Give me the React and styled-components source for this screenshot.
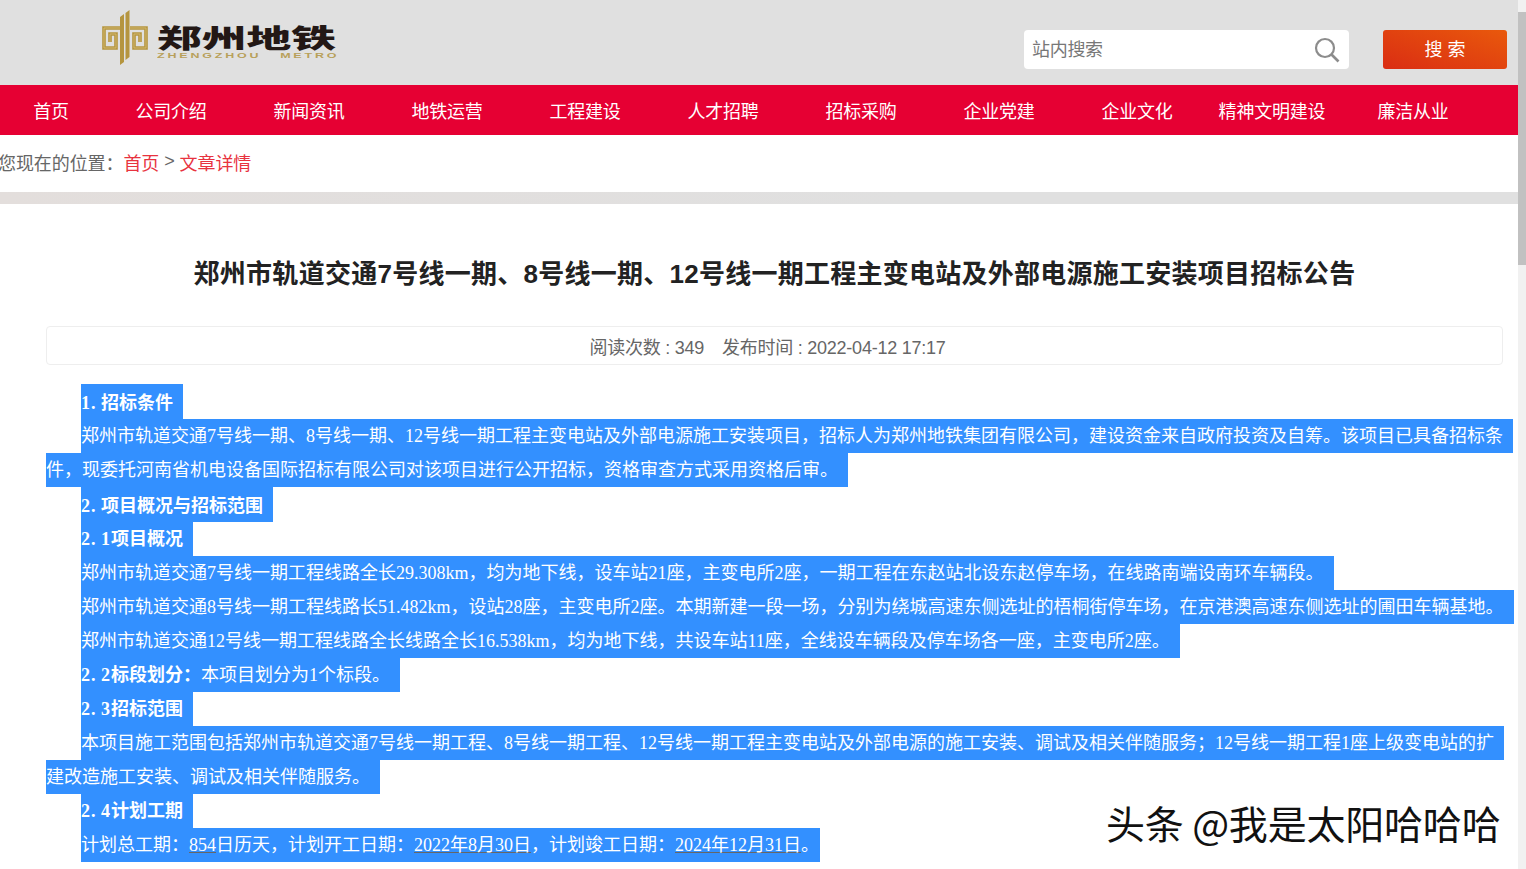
import React from "react";
import styled, { createGlobalStyle } from "styled-components";

const Under = styled.span`
  text-decoration: underline;
  text-decoration-color: #666;
`;

const NumText = styled.span`
  font-weight: 700;
  letter-spacing: 1px;
`;

const Dot = styled.span`
  letter-spacing: 5.5px;
`;

const Strong = styled.span`
  font-weight: 700;
`;

// bold heading numbers sit on an even 10px pitch, dot included
function Num({ major, minor }) {
  return (
    <NumText>
      {major}
      <Dot>.</Dot>
      {minor}
    </NumText>
  );
}

const NAV = [
  ["首页", 102],
  ["公司介绍", 138],
  ["新闻资讯", 138],
  ["地铁运营", 138],
  ["工程建设", 138],
  ["人才招聘", 138],
  ["招标采购", 138],
  ["企业党建", 138],
  ["企业文化", 138],
  ["精神文明建设", 132],
  ["廉洁从业", 150],
];

const LINES = [
  { indent: true, bold: true, tall: true, text: <><Num major="1" />招标条件</> },
  { indent: true, text: "郑州市轨道交通7号线一期、8号线一期、12号线一期工程主变电站及外部电源施工安装项目，招标人为郑州地铁集团有限公司，建设资金来自政府投资及自筹。该项目已具备招标条" },
  { text: "件，现委托河南省机电设备国际招标有限公司对该项目进行公开招标，资格审查方式采用资格后审。" },
  { indent: true, bold: true, tall: true, text: <><Num major="2" />项目概况与招标范围</> },
  { indent: true, bold: true, text: <><Num major="2" minor="1" />项目概况</> },
  { indent: true, text: "郑州市轨道交通7号线一期工程线路全长29.308km，均为地下线，设车站21座，主变电所2座，一期工程在东赵站北设东赵停车场，在线路南端设南环车辆段。" },
  { indent: true, text: "郑州市轨道交通8号线一期工程线路长51.482km，设站28座，主变电所2座。本期新建一段一场，分别为绕城高速东侧选址的梧桐街停车场，在京港澳高速东侧选址的圃田车辆基地。" },
  { indent: true, text: "郑州市轨道交通12号线一期工程线路全长线路全长16.538km，均为地下线，共设车站11座，全线设车辆段及停车场各一座，主变电所2座。" },
  { indent: true, text: <><Num major="2" minor="2" /><Strong>标段划分：</Strong>本项目划分为1个标段。</> },
  { indent: true, bold: true, text: <><Num major="2" minor="3" />招标范围</> },
  { indent: true, text: "本项目施工范围包括郑州市轨道交通7号线一期工程、8号线一期工程、12号线一期工程主变电站及外部电源的施工安装、调试及相关伴随服务；12号线一期工程1座上级变电站的扩" },
  { text: "建改造施工安装、调试及相关伴随服务。" },
  { indent: true, bold: true, text: <><Num major="2" minor="4" />计划工期</> },
  { indent: true, last: true, text: <>计划总工期：<Under>854</Under>日历天，计划开工日期：<Under>2022年8月30日</Under>，计划竣工日期：<Under>2024年12月31日</Under>。</> },
];

const GlobalStyle = createGlobalStyle`
  html, body {
    margin: 0;
    padding: 0;
    height: 100%;
    overflow: hidden;
    background: #fff;
  }
  body {
    font-family: "Liberation Sans", "Noto Sans CJK SC", sans-serif;
  }
`;

const Shell = styled.div`
  display: flex;
  width: 1526px;
  height: 869px;
  overflow: hidden;
  position: relative;
`;

const Page = styled.div`
  width: 1518px;
  flex: none;
`;

const ScrollTrack = styled.div`
  width: 8px;
  background: #f1f1f1;
  padding-top: 12px;
`;

const ScrollThumb = styled.div`
  height: 253px;
  background: #c1c1c1;
`;

const Header = styled.header`
  height: 85px;
  background: #e0e0e0;
  display: flex;
  align-items: flex-start;
`;

const Logo = styled.div`
  display: flex;
  margin: 10px 0 0 102px;
  gap: 9px;
`;

const LogoWords = styled.div`
  display: flex;
  flex-direction: column;
  padding-top: 13px;
  width: 181px;
`;

const LogoCn = styled.div`
  font-family: "Noto Sans CJK SC", sans-serif;
  font-weight: 900;
  font-size: 26px;
  line-height: 28px;
  color: #231815;
  white-space: nowrap;
  transform: scaleX(1.72);
  transform-origin: left center;
`;

const LogoEn = styled.div`
  font-family: "Liberation Sans", sans-serif;
  font-weight: 700;
  font-size: 8px;
  line-height: 8px;
  margin-top: 1px;
  letter-spacing: 1.8px;
  color: #b8a05a;
  white-space: pre;
  transform: scaleX(1.56);
  transform-origin: left center;
`;

const SearchArea = styled.div`
  margin: 30px 11px 0 auto;
  display: flex;
  gap: 34px;
`;

const SearchBox = styled.div`
  width: 325px;
  height: 39px;
  box-sizing: border-box;
  background: #fff;
  border-radius: 4px;
  padding: 0 9px 0 8px;
  display: flex;
  align-items: center;
  justify-content: space-between;
  font-size: 18px;
  letter-spacing: -0.3px;
  color: #777;
`;

const SearchHint = styled.span`
  margin-bottom: 4px;
`;

const SearchButton = styled.button`
  width: 124px;
  height: 39px;
  border: 0;
  padding: 0 0 4px 5px;
  border-radius: 3px;
  background: linear-gradient(20deg, #da2d13 0%, #e9590c 100%);
  color: #fff;
  font-family: "Noto Sans CJK SC", sans-serif;
  font-size: 18px;
  letter-spacing: 5px;
`;

const Nav = styled.nav`
  height: 50px;
  background: #e60033;
  display: flex;
  align-items: center;
`;

const NavItem = styled.a`
  flex: none;
  width: ${(p) => p.$w}px;
  text-align: center;
  color: #fff;
  font-size: 18px;
  letter-spacing: -0.2px;
`;

const Crumbs = styled.div`
  height: 57px;
  box-sizing: border-box;
  padding-bottom: 4px;
  display: flex;
  align-items: center;
  margin-left: -2px;
  font-size: 18px;
  letter-spacing: -0.08px;
  color: #666;
  white-space: pre;
`;

const CrumbLink = styled.a`
  color: #e8333f;
`;

const GreyBar = styled.div`
  height: 12px;
  background: linear-gradient(90deg, #e3dedc 0%, #e0e0e0 60%);
`;

const Article = styled.article`
  padding: 0 6px 0 46px;
`;

const Title = styled.h1`
  margin: 0;
  padding-top: 52px;
  height: 122px;
  box-sizing: border-box;
  line-height: 36px;
  text-align: center;
  font-size: 26px;
  font-weight: 700;
  letter-spacing: 0.26px;
  color: #222;
  width: 1457px;
`;

const Meta = styled.div`
  width: 1457px;
  height: 39px;
  box-sizing: border-box;
  border: 1px solid #eee;
  border-radius: 4px;
  display: flex;
  justify-content: center;
  align-items: center;
  gap: 18px;
  font-size: 18px;
  letter-spacing: -0.25px;
  color: #666;
  margin-bottom: 19px;
  padding-right: 14px;
`;

const Line = styled.div`
  width: fit-content;
  height: ${(p) => (p.$tall ? 35 : 34)}px;
  line-height: ${(p) => (p.$tall ? 39 : 35)}px;
  margin-left: ${(p) => (p.$indent ? 35 : 0)}px;
  padding-right: ${(p) => (p.$last ? 1 : 10)}px;
  background: #3390ff;
  color: #fff;
  font-family: "Liberation Serif", "Noto Sans CJK SC", serif;
  font-size: 18px;
  font-weight: ${(p) => (p.$bold ? 700 : 400)};
  white-space: nowrap;
`;

const Watermark = styled.div`
  position: absolute;
  left: 1106px;
  top: 795px;
  font-family: "Noto Sans CJK SC", sans-serif;
  font-size: 39px;
  line-height: 54px;
  letter-spacing: -0.2px;
  color: #111;
  white-space: pre;
`;

function Emblem() {
  return (
    <svg width="46" height="56" viewBox="0 0 46 56" fill="none">
      {[["#b5953f", 3.6], ["#d8bf78", 0.8]].map(([color, width]) => (
        <g key={color} stroke={color} strokeWidth={width}>
          <path d="M18 18H2V38H14V24H8V32" />
          <path d="M28 18H44V38H32V24H38V32" />
        </g>
      ))}
      <path d="M18 7L22 4V52L18 55Z M23.5 3L27.5 0V47L23.5 50Z" fill="#b5953f" />
    </svg>
  );
}

function SearchIcon() {
  return (
    <svg width="26" height="26" viewBox="0 0 26 26" fill="none" stroke="#8c8c8c">
      <circle cx="11" cy="11" r="9" strokeWidth="2.2" />
      <path d="M17.5 17.5L24.5 24.5" strokeWidth="2.6" />
    </svg>
  );
}

export default function App() {
  return (
    <Shell>
      <GlobalStyle />
      <Page>
        <Header>
          <Logo>
            <Emblem />
            <LogoWords>
              <LogoCn>郑州地铁</LogoCn>
              <LogoEn>ZHENGZHOU   METRO</LogoEn>
            </LogoWords>
          </Logo>
          <SearchArea>
            <SearchBox>
              <SearchHint>站内搜索</SearchHint>
              <SearchIcon />
            </SearchBox>
            <SearchButton>搜索</SearchButton>
          </SearchArea>
        </Header>
        <Nav>
          {NAV.map(([label, w]) => (
            <NavItem key={label} $w={w}>{label}</NavItem>
          ))}
        </Nav>
        <Crumbs>
          您现在的位置：<CrumbLink>首页</CrumbLink> &gt; <CrumbLink>文章详情</CrumbLink>
        </Crumbs>
        <GreyBar />
        <Article>
          <Title>郑州市轨道交通7号线一期、8号线一期、12号线一期工程主变电站及外部电源施工安装项目招标公告</Title>
          <Meta>
            <span>阅读次数 : 349</span>
            <span>发布时间 : 2022-04-12 17:17</span>
          </Meta>
          {LINES.map((l, i) => (
            <Line key={i} $indent={l.indent} $bold={l.bold} $tall={l.tall} $last={l.last}>{l.text}</Line>
          ))}
        </Article>
      </Page>
      <ScrollTrack>
        <ScrollThumb />
      </ScrollTrack>
      <Watermark>头条 @我是太阳哈哈哈</Watermark>
    </Shell>
  );
}
